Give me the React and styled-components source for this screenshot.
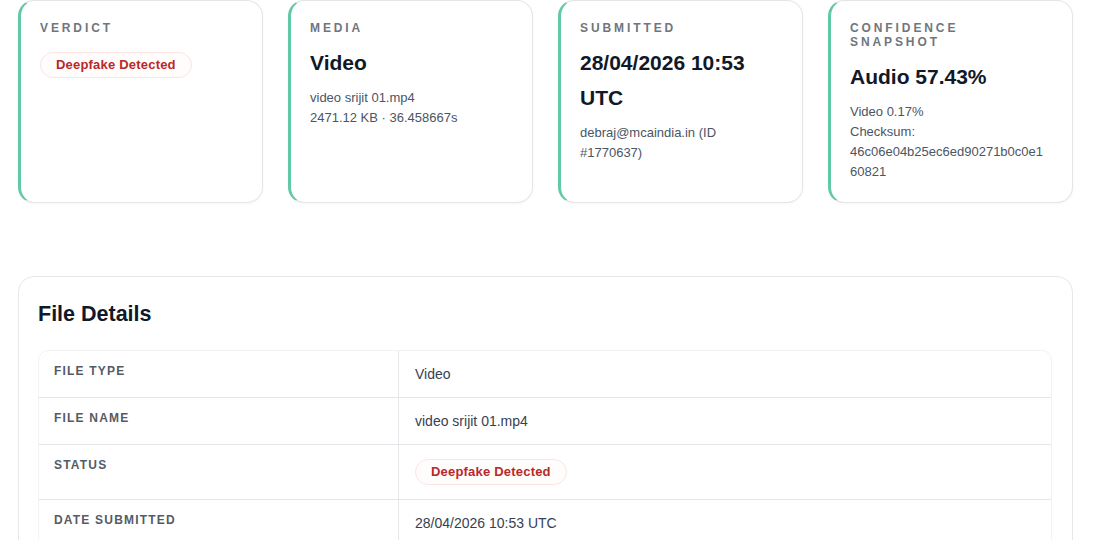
import React from 'react'
import styled, { createGlobalStyle } from 'styled-components'

const GlobalStyle = createGlobalStyle`
    * { box-sizing: border-box; }
    body {
        margin: 0;
        background: #ffffff;
        font-family: "Liberation Sans", Arial, sans-serif;
        color: #111827;
    }
`

const summary = [
    { label: 'Verdict', badge: 'Deepfake Detected' },
    { label: 'Media', value: 'Video', lines: ['video srijit 01.mp4', '2471.12 KB · 36.458667s'] },
    { label: 'Submitted', value: '28/04/2026 10:53 UTC', lines: ['debraj@mcaindia.in (ID #1770637)'] },
    {
        label: 'Confidence Snapshot',
        value: 'Audio 57.43%',
        lines: ['Video 0.17%', 'Checksum:', '46c06e04b25ec6ed90271b0c0e160821'],
        breakAll: true
    }
]

const details = [
    { label: 'File Type', value: 'Video' },
    { label: 'File Name', value: 'video srijit 01.mp4' },
    { label: 'Status', badge: 'Deepfake Detected' },
    { label: 'Date Submitted', value: '28/04/2026 10:53 UTC' },
    { label: 'File Size', value: '2471.12 KB' }
]

function App () {
    return (
        <Page>
            <GlobalStyle />

            <CardGrid>
                { summary.map(card => (
                    <Card key={ card.label }>
                        <CardLabel>{ card.label }</CardLabel>
                        { card.badge && <Badge top="17px">{ card.badge }</Badge> }
                        { card.value && <CardValue>{ card.value }</CardValue> }
                        { card.lines &&
                            <CardMeta breakAll={ card.breakAll }>
                                { card.lines.map(line => <div key={ line }>{ line }</div>) }
                            </CardMeta>
                        }
                    </Card>
                )) }
            </CardGrid>

            <Panel>
                <PanelTitle>File Details</PanelTitle>

                <Table>
                    { details.map(row => (
                        <Row key={ row.label }>
                            <LabelCell>{ row.label }</LabelCell>
                            <ValueCell>
                                { row.badge ? <Badge>{ row.badge }</Badge> : row.value }
                            </ValueCell>
                        </Row>
                    )) }
                </Table>
            </Panel>
        </Page>
    )
}

export default App

const Page = styled.div`
    width: 1055px;
    margin-left: 18px;
`

const CardGrid = styled.div`
    display: grid;
    grid-template-columns: repeat(4, 1fr);
    gap: 25px;
`

const Card = styled.div`
    background: #fff;
    border: 1px solid #e3e5e9;
    border-left: 3px solid #62c9a5;
    border-radius: 16px;
    padding: 20px 24px 20px 19px;
    min-height: 203px;
    box-shadow: 0 1px 3px rgba(17, 24, 39, 0.04);
`

const CardLabel = styled.div`
    font-size: 12px;
    line-height: 14px;
    font-weight: 600;
    letter-spacing: 2.9px;
    text-transform: uppercase;
    color: #70757e;
`

const CardValue = styled.div`
    margin-top: 10px;
    font-size: 21px;
    line-height: 35px;
    font-weight: 700;
    color: #111827;
`

const CardMeta = styled.div`
    margin-top: 8px;
    font-size: 13px;
    line-height: 20px;
    color: #4b5563;
    word-break: ${ props => props.breakAll ? 'break-all' : 'normal' };
`

const Badge = styled.span`
    display: inline-block;
    margin-top: ${ props => props.top || '0' };
    padding: 5px 15px;
    border: 1px solid #fbe4e4;
    border-radius: 999px;
    background: #fffcfc;
    color: #b92828;
    font-size: 13px;
    line-height: 14px;
    font-weight: 700;
    letter-spacing: 0.2px;
`

const Panel = styled.div`
    margin-top: 73px;
    border: 1px solid #e5e7eb;
    border-radius: 16px;
    padding: 24px 20px 20px 19px;
    background: #fff;
`

const PanelTitle = styled.h2`
    margin: 0 0 23px;
    font-size: 21.5px;
    line-height: 26px;
    font-weight: 700;
    color: #111827;
`

const Table = styled.div`
    border: 1px solid #f1f3f5;
    border-radius: 10px;
    overflow: hidden;
`

const Row = styled.div`
    display: grid;
    grid-template-columns: 360px 1fr;
    & + & {
        border-top: 1px solid #e2e5e9;
    }
`

const LabelCell = styled.div`
    padding: 14px 15px;
    font-size: 12px;
    line-height: 13px;
    font-weight: 600;
    letter-spacing: 0.1em;
    text-transform: uppercase;
    color: #555b65;
    border-right: 1px solid #e5e7eb;
`

const ValueCell = styled.div`
    padding: 14px 16px;
    font-size: 14px;
    line-height: 18px;
    color: #374151;
`
